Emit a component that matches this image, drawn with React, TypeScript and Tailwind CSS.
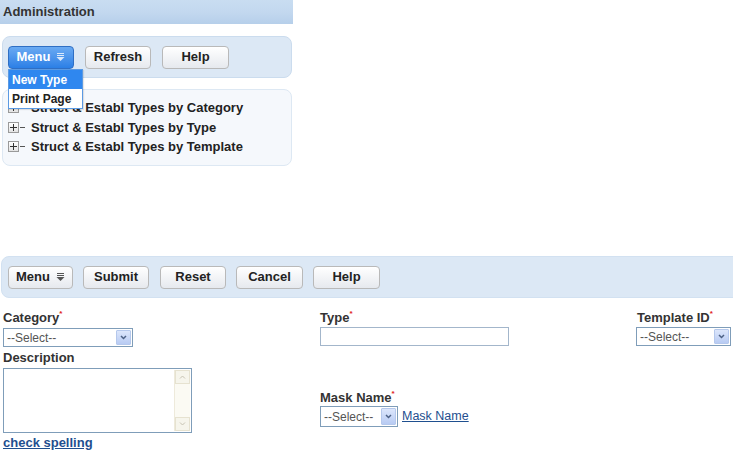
import React from "react";

const Btn = ({ label, w }: { label: string; w: string }) => (
  <div
    className={`${w} h-[23px] flex items-center justify-center rounded-[4px] border border-[#b9b9b9] bg-gradient-to-b from-[#ffffff] to-[#e6e9ee] text-[13px] font-bold text-[#222] shadow-[inset_0_1px_0_#fff]`}
  >
    {label}
  </div>
);

const MenuIcon = ({ color }: { color: string }) => (
  <svg width="9" height="8" viewBox="0 0 9 8" className="ml-[6px]">
    <rect x="1" y="0" width="7" height="1" fill={color} />
    <rect x="1" y="2" width="7" height="1" fill={color} />
    <path d="M0.5 4 L8.5 4 L4.5 8 Z" fill={color} />
  </svg>
);

const Select = ({ w, h = "h-[19px]" }: { w: string; h?: string }) => (
  <div className={`${w} ${h} flex items-stretch border border-[#7f9db9] bg-white`}>
    <div className="flex-1 flex items-center pl-[3px] text-[12px] text-[#555]">--Select--</div>
    <div className="w-[15px] m-[1px] flex items-center justify-center rounded-[1px] border border-[#b5c8ec] bg-gradient-to-b from-[#dce6fb] to-[#b8cbf3]">
      <svg width="7" height="5" viewBox="0 0 7 5">
        <path d="M1 1 L3.5 3.5 L6 1" stroke="#4d6185" strokeWidth="1.5" fill="none" />
      </svg>
    </div>
  </div>
);

const Req = () => <span className="text-[#e02020] text-[8px] align-top leading-none">*</span>;

const TreeRow = ({ label }: { label: string }) => (
  <div className="h-[19.5px] flex items-center">
    <div className="ml-[5px] w-[11px] h-[11px] border border-[#9a9a9a] bg-gradient-to-b from-white to-[#e4e4e4] flex items-center justify-center">
      <svg width="7" height="7" viewBox="0 0 7 7">
        <rect x="0" y="3" width="7" height="1" fill="#333" />
        <rect x="3" y="0" width="1" height="7" fill="#333" />
      </svg>
    </div>
    <div className="w-[5px] h-[1px] bg-[#555] ml-[1px]" />
    <div className="ml-[6px] text-[13px] font-bold text-[#222]">{label}</div>
  </div>
);

export default function App() {
  return (
    <div
      className="w-[733px] h-[453px] bg-white overflow-hidden"
      style={{ fontFamily: '"Liberation Sans", Arial, sans-serif' }}
    >
      <div className="w-[293px]">
        <div className="h-[24px] flex items-center pl-[3px] bg-gradient-to-b from-[#c9ddf1] via-[#c3d8ef] to-[#b6cfea] text-[13px] font-bold text-[#333]">
          Administration
        </div>
        <div className="relative mt-[12px] ml-[2px] mr-[1px] h-[42px] rounded-[8px] border border-[#cbdcee] bg-[#dce8f5] flex items-center pl-[5px] gap-[10px]">
          <div className="w-[66px] h-[23px] flex items-center justify-center rounded-[4px] border border-[#2f6fc4] bg-gradient-to-b from-[#6aaaf2] to-[#2a7fe6] text-[13px] font-bold text-white">
            Menu
            <MenuIcon color="#dbe9fb" />
          </div>
          <Btn label="Refresh" w="w-[66px] ml-[1px]" />
          <Btn label="Help" w="w-[67px] ml-[1px]" />
          <div className="absolute left-[5px] top-[32px] w-[75px] border border-[#5b9ae3] bg-white z-10 shadow-[1px_1px_1px_rgba(0,0,0,0.1)]">
            <div className="h-[19px] flex items-center pl-[3px] bg-[#2f87ef] text-[12px] font-bold text-white">
              New Type
            </div>
            <div className="h-[19px] flex items-center pl-[3px] bg-white text-[12px] font-bold text-[#222]">
              Print Page
            </div>
          </div>
        </div>
        <div className="mt-[11px] ml-[2px] mr-[1px] h-[77px] rounded-[8px] border border-[#dde8f3] bg-[#f5f8fc] pt-[8px]">
          <TreeRow label="Struct & Establ Types by Category" />
          <TreeRow label="Struct & Establ Types by Type" />
          <TreeRow label="Struct & Establ Types by Template" />
        </div>
      </div>

      <div className="mt-[90px] ml-[1px] w-[760px] h-[42px] rounded-l-[8px] bg-[#dce8f5] border border-[#d2e1f1] flex items-center pl-[6px] gap-[10px]">
        <div className="w-[65px] h-[23px] flex items-center justify-center rounded-[4px] border border-[#b9b9b9] bg-gradient-to-b from-[#ffffff] to-[#e6e9ee] text-[13px] font-bold text-[#222]">
          Menu
          <MenuIcon color="#555" />
        </div>
        <Btn label="Submit" w="w-[66px]" />
        <Btn label="Reset" w="w-[66px] ml-[1px]" />
        <Btn label="Cancel" w="w-[67px]" />
        <Btn label="Help" w="w-[67px]" />
      </div>

      <div className="flex mt-[12px] text-[13px] text-[#333]">
        <div className="w-[320px] pl-[3px] flex flex-col">
          <div className="h-[15px] leading-[15px] font-bold">
            Category<Req />
          </div>
          <div className="mt-[3px]">
            <Select w="w-[130px]" />
          </div>
          <div className="mt-[3px] h-[15px] leading-[15px] font-bold">Description</div>
          <div className="mt-[3px] w-[189px] h-[65px] border border-[#7f9db9] bg-white flex justify-end p-[1px]">
            <div className="w-[16px] h-full flex flex-col justify-between bg-[#fbfaf3] border-l border-[#eeeadb]">
              <div className="h-[14px] flex items-center justify-center border border-[#e6e2d0] bg-[#f6f5ec]">
                <svg width="7" height="4" viewBox="0 0 7 4">
                  <path d="M1 3.5 L3.5 1 L6 3.5" stroke="#c6c2b2" strokeWidth="1" fill="none" />
                </svg>
              </div>
              <div className="h-[14px] flex items-center justify-center border border-[#e6e2d0] bg-[#f6f5ec]">
                <svg width="7" height="4" viewBox="0 0 7 4">
                  <path d="M1 0.5 L3.5 3 L6 0.5" stroke="#c6c2b2" strokeWidth="1" fill="none" />
                </svg>
              </div>
            </div>
          </div>
          <div className="mt-[2px] font-bold text-[#1f4f8f] underline leading-[15px]">check spelling</div>
        </div>
        <div className="w-[316px] flex flex-col">
          <div className="h-[15px] leading-[15px] font-bold">
            Type<Req />
          </div>
          <div className="mt-[2px] w-[189px] h-[19px] border border-[#a3b6cb] bg-white" />
          <div className="mt-[44px] h-[15px] leading-[15px] font-bold">
            Mask Name<Req />
          </div>
          <div className="mt-[1px] flex items-center">
            <Select w="w-[78px]" h="h-[21px]" />
            <span className="ml-[4px] text-[12.5px] text-[#1f4f8f] underline">Mask Name</span>
          </div>
        </div>
        <div className="flex-1 flex flex-col">
          <div className="pl-[1px] h-[15px] leading-[15px] font-bold">
            Template ID<Req />
          </div>
          <div className="mt-[2px]">
            <Select w="w-[95px]" />
          </div>
        </div>
      </div>
    </div>
  );
}
